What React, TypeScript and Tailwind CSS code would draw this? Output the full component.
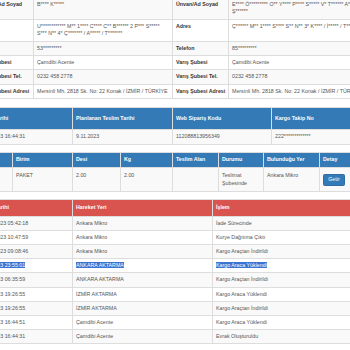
const td = "border border-[#ddd] px-[3px] py-[3px] align-top text-left";
const thInfo = "border border-[#ddd] px-[3px] py-[3px] align-top text-left font-bold text-[#333]";

type Val = string | string[];

const infoRows: [string, Val, string, Val][] = [
  ["Ünvan/Ad Soyad", "B**** K*****", "Ünvan/Ad Soyad", ["E**** Ö********* O** Y**** P**** S***** V* T****** A****", "Ş******"]],
  ["Adres", ["U************ M** 1**** C**** C** B****** 2 P*** S*****", "S*** N** 4* Ç******* / A***** / T*******"], "Adres", "Ç****** M** 1**** S**** S** N** 3* K**** / İ***** / T******"],
  ["Telefon", "53*********", "Telefon", "85*********"],
  ["Çıkış Şubesi", "Çamdibi Acente", "Varış Şubesi", "Çamdibi Acente"],
  ["Çıkış Şubesi Tel.", "0232 458 2778", "Varış Şubesi Tel.", "0232 458 2778"],
  ["Çıkış Şubesi Adresi", "Mersinli Mh. 2818 Sk. No: 22 Konak / İZMİR / TÜRKİYE", "Varış Şubesi Adresi", "Mersinli Mh. 2818 Sk. No: 22 Konak / İZMİR / TÜRKİYE"],
];

const movements = [
  ["13.11.2023 05:42:18", "Ankara Mikro", "İade Sürecinde"],
  ["10.11.2023 10:47:59", "Ankara Mikro", "Kurye Dağıtıma Çıktı"],
  ["10.11.2023 09:08:46", "Ankara Mikro", "Kargo Araçtan İndirildi"],
  ["9.11.2023 23:55:01", "ANKARA AKTARMA", "Kargo Araca Yüklendi"],
  ["9.11.2023 06:35:59", "ANKARA AKTARMA", "Kargo Araçtan İndirildi"],
  ["9.11.2023 19:26:55", "İZMİR AKTARMA", "Kargo Araca Yüklendi"],
  ["9.11.2023 19:26:55", "İZMİR AKTARMA", "Kargo Araçtan İndirildi"],
  ["9.11.2023 16:44:51", "Çamdibi Acente", "Kargo Araca Yüklendi"],
  ["9.11.2023 16:44:31", "Çamdibi Acente", "Evrak Oluşturuldu"],
];

function Value({ v }: { v: Val }) {
  if (typeof v === "string") return <span className="whitespace-nowrap">{v}</span>;
  return (
    <>
      {v[0]}
      <br />
      {v[1]}
    </>
  );
}

function InfoTable() {
  return (
    <table className="w-full table-fixed border-collapse mb-[7.6px] leading-[7.4px]">
      <colgroup>
        <col className="w-[57px]" />
        <col className="w-[139px]" />
        <col className="w-[56px]" />
        <col className="w-[142px]" />
      </colgroup>
      <tbody>
        {infoRows.map((r, i) => (
          <tr key={i} className="odd:bg-[#f9f9f9]">
            <th className={thInfo + " whitespace-nowrap"}>{r[0]}</th>
            <td className={td + " text-[#555]"}><Value v={r[1]} /></td>
            <th className={thInfo + " whitespace-nowrap"}>{r[2]}</th>
            <td className={td + " text-[#555]"}><Value v={r[3]} /></td>
          </tr>
        ))}
      </tbody>
    </table>
  );
}

function OrderTable() {
  const heads = ["Çıkış Tarihi", "Planlanan Teslim Tarihi", "Web Sipariş Kodu", "Kargo Takip No"];
  const vals = ["9.11.2023 16:44:31", "9.11.2023", "112088813956349", "222*************"];
  return (
    <table className="w-full table-fixed border-collapse mb-[7.6px] leading-[7.4px]">
      <colgroup>
        <col className="w-[96px]" />
        <col className="w-[100px]" />
        <col className="w-[99px]" />
        <col className="w-[99px]" />
      </colgroup>
      <thead>
        <tr className="bg-[#337ab7] text-white">
          {heads.map((h) => (
            <th key={h} className="border border-[#ddd] px-[3px] py-[7px] text-left font-bold whitespace-nowrap">{h}</th>
          ))}
        </tr>
      </thead>
      <tbody>
        <tr className="bg-[#f9f9f9] text-[#555]">
          {vals.map((v) => (
            <td key={v} className={td + " whitespace-nowrap"}>{v}</td>
          ))}
        </tr>
      </tbody>
    </table>
  );
}

function PackageTable() {
  const heads = ["Adet", "Birim", "Desi", "Kg", "Teslim Alan", "Durumu", "Bulunduğu Yer", "Detay"];
  return (
    <table className="w-full table-fixed border-collapse mb-[7.6px] leading-[7.4px]">
      <colgroup>
        <col className="w-[36px]" />
        <col className="w-[60px]" />
        <col className="w-[48px]" />
        <col className="w-[52px]" />
        <col className="w-[46px]" />
        <col className="w-[45px]" />
        <col className="w-[56px]" />
        <col className="w-[51px]" />
      </colgroup>
      <thead>
        <tr className="bg-[#337ab7] text-white">
          {heads.map((h) => (
            <th key={h} className="border border-[#ddd] px-[3px] py-[3px] text-left font-bold whitespace-nowrap">{h}</th>
          ))}
        </tr>
      </thead>
      <tbody className="leading-[8.5px] text-[#555]">
        <tr className="bg-[#f9f9f9]">
          <td className={td}>1</td>
          <td className={td}>PAKET</td>
          <td className={td}>2.00</td>
          <td className={td}>2.00</td>
          <td className={td}></td>
          <td className={td}>Teslimat Şubesinde</td>
          <td className={td}>Ankara Mikro</td>
          <td className={td}>
            <button className="block mt-[3px] w-[22px] h-[12.6px] rounded-[1.5px] border border-[#2e6da4] bg-[#337ab7] text-white text-[5.3px] leading-none">
              Getir
            </button>
          </td>
        </tr>
      </tbody>
    </table>
  );
}

function MovementTable() {
  return (
    <table className="w-full table-fixed border-collapse leading-[7.2px]">
      <colgroup>
        <col className="w-[96px]" />
        <col className="w-[140px]" />
        <col className="w-[158px]" />
      </colgroup>
      <thead>
        <tr className="bg-[#d9534f] text-white leading-[7.4px]">
          <th className="border border-[#ddd] px-[3px] py-[4px] text-left font-bold whitespace-nowrap">İşlem Tarihi</th>
          <th className="border border-[#ddd] px-[3px] py-[4px] text-left font-bold">Hareket Yeri</th>
          <th className="border border-[#ddd] px-[3px] py-[4px] text-left font-bold">İşlem</th>
        </tr>
      </thead>
      <tbody className="text-[#555]">
        {movements.map((m, i) => (
          <tr key={i} className="odd:bg-[#f9f9f9]">
            {m.map((c, j) => (
              <td key={j} className={td + " whitespace-nowrap"}>
                {i === 3 ? <span className="bg-[#3a73d0] text-white">{c}</span> : c}
              </td>
            ))}
          </tr>
        ))}
      </tbody>
    </table>
  );
}

export default function App() {
  return (
    <div className="w-[350px] h-[350px] overflow-hidden bg-white font-['Liberation_Sans',Arial,sans-serif] text-[5.3px] text-[#333]">
      <div className="w-[394px] -ml-[24px] -mt-[3px]">
        <InfoTable />
        <OrderTable />
        <PackageTable />
        <MovementTable />
      </div>
    </div>
  );
}
